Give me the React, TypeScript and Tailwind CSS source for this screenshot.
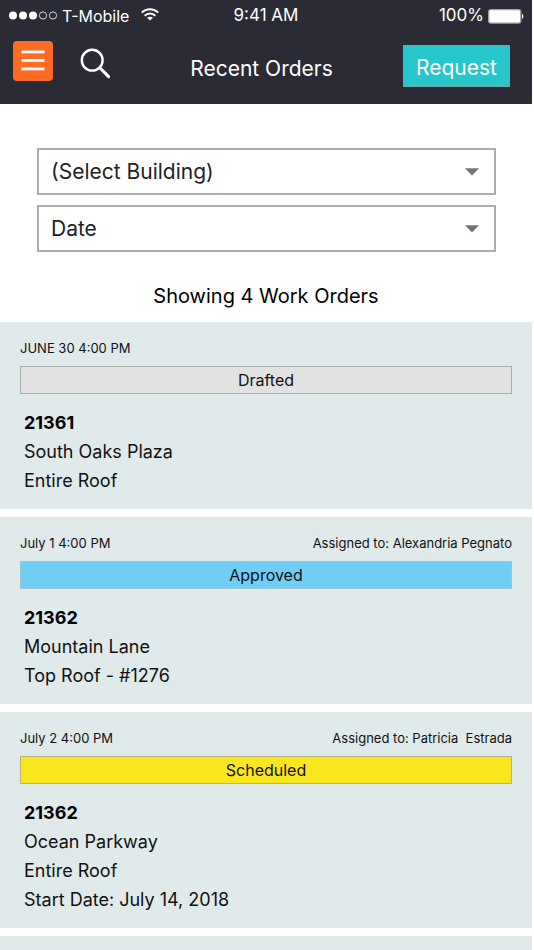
import React, { useState } from 'react';

interface Order {
  date: string;
  status: string;
  assignee?: string;
  number: string;
  details: string[];
}

const ORDERS: Order[] = [
  { date: 'JUNE 30 4:00 PM', status: 'Drafted', number: '21361', details: ['South Oaks Plaza', 'Entire Roof'] },
  {
    date: 'July 1 4:00 PM',
    status: 'Approved',
    assignee: 'Alexandria Pegnato',
    number: '21362',
    details: ['Mountain Lane', 'Top Roof - #1276'],
  },
  {
    date: 'July 2 4:00 PM',
    status: 'Scheduled',
    assignee: 'Patricia  Estrada',
    number: '21362',
    details: ['Ocean Parkway', 'Entire Roof', 'Start Date: July 14, 2018'],
  },
];

const STATUS_STYLES: Record<string, string> = {
  Drafted: 'bg-[#e3e2e3] border-[#a9adae]',
  Approved: 'bg-[#70cdf4] border-[#9fc3d0]',
  Scheduled: 'bg-[#f8e71c] border-[#b5b37a]',
};

const StatusBar: React.FC = () => (
  <div className="flex h-8 items-center px-2 text-[17px]">
    <div className="flex flex-1 items-center">
      <svg width="50" height="10" viewBox="0 0 50 10" className="mr-1" aria-hidden="true">
        <circle cx="5" cy="4.5" r="4" fill="#fff" />
        <circle cx="15" cy="4.5" r="4" fill="#fff" />
        <circle cx="25" cy="4.5" r="4" fill="#fff" />
        <circle cx="35" cy="4.5" r="3.6" fill="none" stroke="#fff" strokeWidth="0.8" />
        <circle cx="45" cy="4.5" r="3.6" fill="none" stroke="#fff" strokeWidth="0.8" />
      </svg>
      <span className="text-base">T-Mobile</span>
      <svg width="18" height="13" viewBox="0 0 18 13" className="mb-1 ml-3" fill="none" stroke="#fff" strokeWidth="2" aria-hidden="true">
        <path d="M0.8 4.6C5.4 0 12.6 0 17.2 4.6" />
        <path d="M3.7 7.7C6.7 4.7 11.3 4.7 14.3 7.7" />
        <path d="M9 12.6L6 9.8C7.7 8.3 10.3 8.3 12 9.8Z" fill="#fff" stroke="none" />
      </svg>
    </div>
    <span>9:41 AM</span>
    <div className="flex flex-1 items-center justify-end gap-1">
      <span>100%</span>
      <svg width="36" height="15" viewBox="0 0 36 15" aria-hidden="true">
        <rect x="0.7" y="0.7" width="32" height="13.4" rx="2" fill="#fff" stroke="#a3a4a8" strokeWidth="1.3" />
        <path d="M34 5C35.8 5.4 35.8 9.4 34 9.8Z" fill="#fff" />
      </svg>
    </div>
  </div>
);

const Header: React.FC = () => (
  <header className="h-[104px] shrink-0 bg-[#2a2b35] text-white">
    <StatusBar />
    <div className="flex items-start pl-[13px] pr-[22px] pt-[9px]">
      <div className="flex flex-1 items-start gap-[27px]">
        <button type="button" aria-label="Menu" className="flex size-10 items-center justify-center rounded bg-[#ff6b22]">
          <svg width="24" height="22" viewBox="0 0 24 22" fill="#fff" aria-hidden="true">
            <rect x="0.5" y="0.5" width="23" height="2.8" />
            <rect x="0.5" y="9" width="23" height="2.8" />
            <rect x="0.5" y="17.5" width="23" height="2.8" />
          </svg>
        </button>
        <button type="button" aria-label="Search" className="pt-[7px]">
          <svg width="31" height="31" viewBox="0 0 31 31" fill="none" stroke="#fff" aria-hidden="true">
            <circle cx="12.2" cy="12.2" r="10.4" strokeWidth="2.4" />
            <path d="M19.8 19.8L28.6 28.6" strokeWidth="3" strokeLinecap="round" />
          </svg>
        </button>
      </div>
      <h1 className="pt-3 text-[21px] leading-8">Recent Orders</h1>
      <div className="flex flex-1 justify-end pt-1">
        <button type="button" className="h-[42px] border border-[#6fa9ab] bg-[#26c6ca] px-3 pt-1 text-[21px]">
          Request
        </button>
      </div>
    </div>
  </header>
);

interface FilterSelectProps {
  label: string;
  options: string[];
}

const FilterSelect: React.FC<FilterSelectProps> = ({ label, options }) => {
  const [value, setValue] = useState(options[0]);

  return (
    <div className="relative">
      <select
        aria-label={label}
        value={value}
        onChange={(e) => setValue(e.target.value)}
        className="block h-[47px] w-full appearance-none border-2 border-[#aeaeae] bg-white px-3 text-[21px] text-[#222]"
      >
        {options.map(option => <option key={option}>{option}</option>)}
      </select>
      <svg width="14" height="8" viewBox="0 0 14 8" className="pointer-events-none absolute right-[17px] top-5" aria-hidden="true">
        <path d="M0 0.3H14L7 7.6Z" fill="#747474" />
      </svg>
    </div>
  );
};

const OrderCard: React.FC<{ order: Order }> = ({ order }) => (
  <li className="bg-[#e1eaeb] px-5 pb-[14px] pt-4 text-[#111]">
    <div className="flex justify-between text-[13px] leading-5">
      <span>{order.date}</span>
      {order.assignee && <span className="whitespace-pre">Assigned to: {order.assignee}</span>}
    </div>
    <div className={`mt-2 flex h-7 items-center justify-center border text-base ${STATUS_STYLES[order.status]}`}>
      {order.status}
    </div>
    <div className="mt-[14px] pl-1 text-lg leading-[29px]">
      <h2 className="font-bold text-black">{order.number}</h2>
      {order.details.map(line => <p key={line}>{line}</p>)}
    </div>
  </li>
);

const App: React.FC = () => {
  return (
    <div className="flex h-screen flex-col overflow-hidden bg-white pr-0.5 font-['Inter','Liberation_Sans',sans-serif]">
      <Header />
      <main className="flex flex-1 flex-col">
        <div className="flex flex-col gap-[10px] pl-[37px] pr-9 pt-11">
          <FilterSelect label="Building" options={['(Select Building)']} />
          <FilterSelect label="Date" options={['Date']} />
        </div>
        <p className="pb-3 pt-[30px] text-center text-xl text-black">Showing 4 Work Orders</p>
        <ul className="flex flex-1 flex-col gap-2">
          {ORDERS.map(order => <OrderCard key={order.date} order={order} />)}
          <li className="flex-1 bg-[#e1eaeb]" />
        </ul>
      </main>
    </div>
  );
};

export default App;
